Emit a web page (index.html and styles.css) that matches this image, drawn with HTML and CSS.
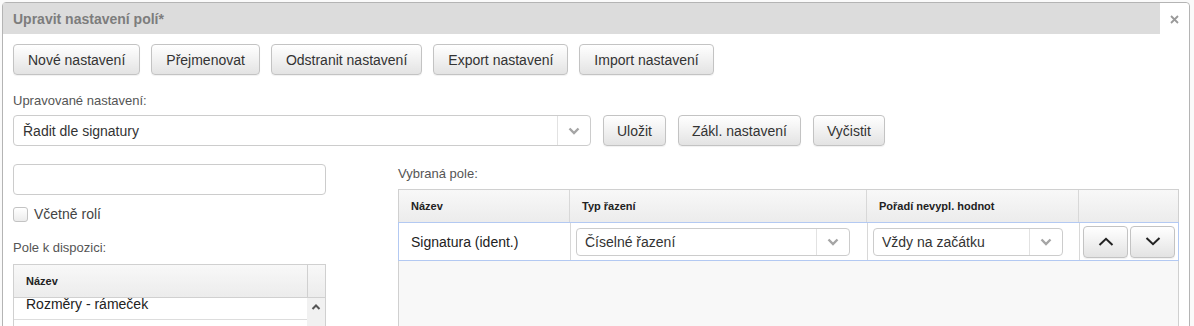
FILE: index.html
```html
<!DOCTYPE html>
<html lang="cs">
  <head>
    <meta charset="UTF-8" />
    <meta name="viewport" content="width=device-width, initial-scale=1.0" />
    <title>Upravit nastavení polí</title>

    <link rel="stylesheet" href="styles.css">
  </head>
  <body>
    <div class="dialog">
      <!-- Header -->
      <div class="dialog-header">
        <div class="dialog-title">Upravit nastavení polí*</div>
        <button class="dialog-close" title="Zavřít">
          <svg width="9" height="9" viewBox="0 0 9 9">
            <path d="M1 1 L8 8 M8 1 L1 8" stroke="#9a9a9a" stroke-width="1.8" fill="none" />
          </svg>
        </button>
      </div>

      <div class="dialog-body">
        <!-- Toolbar -->
        <div class="toolbar">
          <button class="btn">Nové nastavení</button>
          <button class="btn">Přejmenovat</button>
          <button class="btn">Odstranit nastavení</button>
          <button class="btn">Export nastavení</button>
          <button class="btn">Import nastavení</button>
        </div>

        <div class="field-label">Upravované nastavení:</div>
        <div class="setting-row">
          <div class="select select-main">
            <span class="select-value">Řadit dle signatury</span>
            <span class="select-arrow">
              <svg width="12" height="8" viewBox="0 0 12 8">
                <path d="M1.5 1.5 L6 6 L10.5 1.5" stroke="#a5a5a5" stroke-width="2.4" fill="none" />
              </svg>
            </span>
          </div>
          <button class="btn">Uložit</button>
          <button class="btn">Zákl. nastavení</button>
          <button class="btn">Vyčistit</button>
        </div>

        <div class="columns">
          <!-- Available fields -->
          <div class="col-left">
            <input class="text-input" type="text" />
            <label class="check">
              <span class="check-box"></span>
              Včetně rolí
            </label>
            <div class="field-label">Pole k dispozici:</div>
            <div class="avail-table">
              <div class="avail-head">
                <div class="avail-head-cell">Název</div>
                <div class="avail-head-scroll"></div>
              </div>
              <div class="avail-body">
                <div class="avail-rows">
                  <div class="avail-row">Rozměry - rámeček</div>
                </div>
                <div class="avail-scroll">
                  <svg width="10" height="6" viewBox="0 0 10 6">
                    <path d="M1.5 5 L5 1.5 L8.5 5" stroke="#555" stroke-width="2" fill="none" />
                  </svg>
                </div>
              </div>
            </div>
          </div>

          <!-- Selected fields -->
          <div class="col-right">
            <div class="field-label">Vybraná pole:</div>
            <div class="sel-table">
              <div class="sel-head">
                <div class="cell c-name">Název</div>
                <div class="cell c-type">Typ řazení</div>
                <div class="cell c-order">Pořadí nevypl. hodnot</div>
                <div class="cell c-move"></div>
              </div>
              <div class="sel-row">
                <div class="cell c-name">Signatura (ident.)</div>
                <div class="cell c-type">
                  <div class="select select-sm select-type">
                    <span class="select-value">Číselné řazení</span>
                    <span class="select-arrow">
                      <svg width="12" height="8" viewBox="0 0 12 8">
                        <path d="M1.5 1.5 L6 6 L10.5 1.5" stroke="#a5a5a5" stroke-width="2.4" fill="none" />
                      </svg>
                    </span>
                  </div>
                </div>
                <div class="cell c-order">
                  <div class="select select-sm select-order">
                    <span class="select-value">Vždy na začátku</span>
                    <span class="select-arrow">
                      <svg width="12" height="8" viewBox="0 0 12 8">
                        <path d="M1.5 1.5 L6 6 L10.5 1.5" stroke="#a5a5a5" stroke-width="2.4" fill="none" />
                      </svg>
                    </span>
                  </div>
                </div>
                <div class="cell c-move">
                  <button class="btn btn-move" title="Nahoru">
                    <svg width="16" height="9" viewBox="0 0 16 9">
                      <path d="M1.5 8 L8 1.8 L14.5 8" stroke="#222" stroke-width="2" fill="none" />
                    </svg>
                  </button>
                  <button class="btn btn-move" title="Dolů">
                    <svg width="16" height="9" viewBox="0 0 16 9">
                      <path d="M1.5 1 L8 7.2 L14.5 1" stroke="#222" stroke-width="2" fill="none" />
                    </svg>
                  </button>
                </div>
              </div>
              <div class="sel-empty"></div>
            </div>
          </div>
        </div>
      </div>
    </div>
  </body>
</html>
```

FILE: styles.css
```css
/* General */
body {
  margin: 0;
  height: 326px;
  overflow: hidden;
  background: #fafafa;
  font-family: "Liberation Sans", Arial, sans-serif;
  font-size: 14px;
  color: #333;
}

/* Dialog */
.dialog {
  margin: 2px 0 0 2px;
  width: 1186px;
  height: 420px;
  background: white;
  border: 1px solid #b4b4b4;
  border-radius: 4px 4px 0 0;
}

.dialog-header {
  display: flex;
  height: 31px;
}

.dialog-title {
  flex: 1;
  background: #dcdcdc;
  padding: 2px 0 0 10px;
  line-height: 29px;
  font-size: 14px;
  font-weight: bold;
  color: #7d7d7d;
}

.dialog-close {
  width: 29px;
  border: none;
  background: white;
  padding: 2px 0 0 0;
  display: flex;
  align-items: center;
  justify-content: center;
  border-radius: 0 4px 0 0;
}

.dialog-body {
  padding: 0 10px;
}

/* Buttons */
.btn {
  height: 31px;
  padding: 0 14px;
  font-family: inherit;
  font-size: 14px;
  color: #333;
  background: linear-gradient(#ffffff, #e3e3e3);
  border: 1px solid #c3c3c3;
  border-radius: 4px;
  box-shadow: 0 1px 1px rgba(0, 0, 0, 0.06);
  cursor: pointer;
}

.toolbar {
  display: flex;
  gap: 11px;
  margin-top: 10px;
}

.field-label {
  font-size: 13px;
  line-height: 16px;
  color: #555;
}

.dialog-body > .field-label {
  margin-top: 18px;
}

.setting-row {
  display: flex;
  gap: 12px;
  margin-top: 6px;
}

.setting-row .btn {
  padding: 0 13px;
}

/* Select */
.select {
  display: flex;
  align-items: center;
  height: 31px;
  box-sizing: border-box;
  border: 1px solid #cccccc;
  border-radius: 4px;
  background: white;
}

.select-main {
  width: 578px;
}

.select-value {
  flex: 1;
  padding-left: 9px;
  white-space: nowrap;
  overflow: hidden;
}

.select-arrow {
  width: 32px;
  height: 100%;
  border-left: 1px solid #e2e2e2;
  display: flex;
  align-items: center;
  justify-content: center;
}

.select-sm {
  height: 28px;
}

.select-sm .select-value {
  padding-left: 8px;
}

.select-type {
  width: 274px;
}

.select-order {
  width: 190px;
}

/* Columns */
.columns {
  display: flex;
  margin-top: 18px;
}

.col-left {
  width: 313px;
}

.col-right {
  margin-left: 72px;
  width: 782px;
  padding-top: 2px;
}

.text-input {
  display: block;
  width: 313px;
  height: 31px;
  box-sizing: border-box;
  border: 1px solid #cccccc;
  border-radius: 4px;
  margin: 0;
}

.check {
  display: flex;
  align-items: center;
  gap: 6px;
  margin-top: 11px;
  line-height: 16px;
  color: #444;
}

.check-box {
  width: 13px;
  height: 13px;
  border: 1px solid #c3c3c3;
  border-radius: 3px;
  background: linear-gradient(#ffffff, #ececec);
}

.col-left .field-label {
  margin-top: 18px;
}

/* Available fields table */
.avail-table {
  margin-top: 8px;
  border: 1px solid #d0d0d0;
  width: 311px;
}

.avail-head {
  display: flex;
  height: 32px;
  background: linear-gradient(#f8f8f8, #ececec);
  border-bottom: 1px solid #d0d0d0;
}

.avail-head-cell {
  flex: 1;
  padding-left: 12px;
  line-height: 32px;
  font-size: 11px;
  font-weight: bold;
  color: #222;
}

.avail-head-scroll {
  width: 17px;
  border-left: 1px solid #d0d0d0;
}

.avail-body {
  display: flex;
  height: 80px;
}

.avail-rows {
  flex: 1;
}

.avail-row {
  height: 21px;
  line-height: 13px;
  overflow: hidden;
  padding-left: 12px;
  color: #222;
  border-bottom: 1px solid #dddddd;
}

.avail-scroll {
  width: 18px;
  background: #f1f1f1;
  display: flex;
  justify-content: center;
  padding-top: 6px;
  box-sizing: border-box;
}

/* Selected fields table */
.sel-table {
  margin-top: 7px;
  border: 1px solid #d0d0d0;
  border-bottom: none;
  background: #f8f8f8;
}

.sel-head {
  display: flex;
  height: 32px;
  background: linear-gradient(#f8f8f8, #ececec);
}

.sel-head .cell {
  line-height: 32px;
  font-size: 11px;
  font-weight: bold;
  color: #222;
  padding-left: 12px;
}

.cell {
  box-sizing: border-box;
  border-right: 1px solid #d8d8d8;
}

.cell:last-child {
  border-right: none;
}

.c-name {
  width: 171px;
  padding-left: 12px;
}

.c-type {
  width: 297px;
  padding-left: 5px;
}

.c-order {
  width: 212px;
  padding-left: 5px;
}

.c-move {
  flex: 1;
  display: flex;
  gap: 2px;
  padding-left: 3px;
}

.sel-row {
  display: flex;
  height: 37px;
  background: white;
  border: 1px solid #b3c9f2;
  margin: 0 -1px;
  align-items: stretch;
}

.sel-row .cell {
  display: flex;
  align-items: center;
}

.sel-row .c-name {
  width: 172px;
  color: #222;
}

.btn-move {
  width: 45px;
  height: 32px;
  padding: 0;
  display: flex;
  align-items: center;
  justify-content: center;
}

.sel-empty {
  height: 120px;
}
```
